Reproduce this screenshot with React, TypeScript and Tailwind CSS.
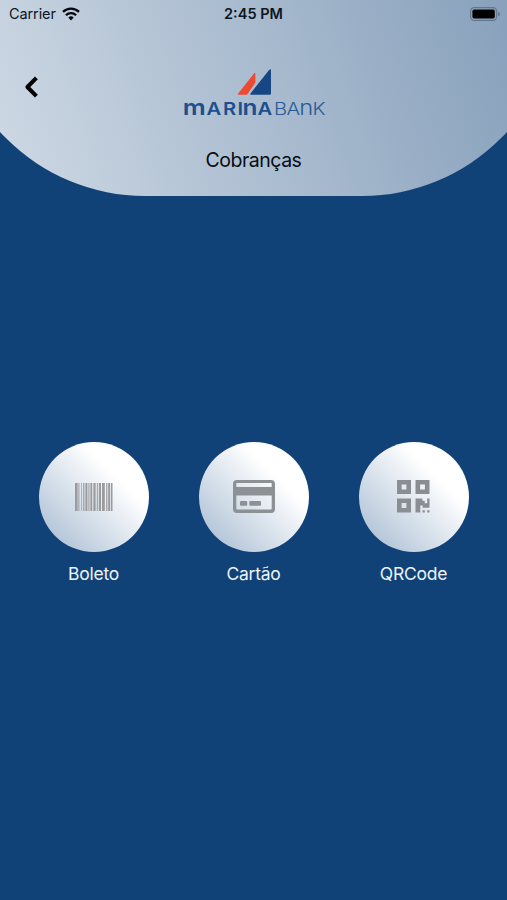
import type { ReactNode } from "react";

const bars = [
  [0, 2.6], [3.4, 1], [6.2, 0.7], [8.2, 1.2], [10.4, 2], [13.4, 1], [15.4, 1.8], [18.4, 2.2],
  [21.8, 1], [23.8, 2.2], [27, 2.8], [31.2, 1.2], [33.2, 1.8], [35.8, 1.7],
];

function Wifi() {
  return (
    <svg width="18" height="14" viewBox="0 0 18 14" fill="none" stroke="#05080c" strokeWidth="2.3">
      <path d="M1 4.9a11.5 11.5 0 0 1 16 0" />
      <path d="M3.9 8.2a7.2 7.2 0 0 1 10.2 0" />
      <path d="M9 13.4 6.3 10.6a3.9 3.9 0 0 1 5.4 0z" fill="#05080c" stroke="none" />
    </svg>
  );
}

function Battery() {
  return (
    <svg width="31" height="14" viewBox="0 0 31 14">
      <rect x="0.6" y="0.6" width="26" height="12.8" rx="3.6" fill="none" stroke="#62778d" strokeWidth="1.2" />
      <rect x="2.4" y="2.4" width="22.4" height="9.2" rx="1.8" fill="#000" />
      <path d="M28.2 4.6c2.4.8 2.4 4 0 4.8z" fill="#62778d" />
    </svg>
  );
}

function Logo() {
  return (
    <svg
      className="overflow-visible"
      width="144"
      height="54"
      viewBox="182 68 144 54"
      fontFamily="Inter, sans-serif"
    >
      <path d="M254.2 73.3q1.2-.8 1.2.8v8.4l-7.8 11.6q-.4.7-1.3.7h-7.6q-1.5 0-.5-1.4z" fill="#ee4a31" />
      <path d="M269.3 69.7q1.7-1.4 1.7.8v23q0 1.3-1.3 1.3h-18.3q-1.8 0-.7-1.5z" fill="#164784" />
      <g transform="translate(182 115.2) scale(1.16 1)">
        <text fontSize="17.4" fontWeight="600" fill="#1c4f8d">
          <tspan x="0.6" fontSize="22">m</tspan>
          <tspan x="21.1">A</tspan>
          <tspan x="35.3">R</tspan>
          <tspan x="47.8">I</tspan>
          <tspan x="52.1" fontSize="21">n</tspan>
          <tspan x="65">A</tspan>
        </text>
        <text fontSize="17.4" fontWeight="300" fill="#2a5b96">
          <tspan x="79.3">B</tspan>
          <tspan x="90.2">A</tspan>
          <tspan x="101" fontSize="20.5">n</tspan>
          <tspan x="112.6">K</tspan>
        </text>
      </g>
    </svg>
  );
}

function BarcodeIcon() {
  return (
    <svg width="38" height="28" viewBox="0 0 38 28" fill="#999b9d">
      {bars.map(([x, w]) => (
        <rect key={x} x={x} width={w} height="28" />
      ))}
    </svg>
  );
}

function CardIcon() {
  return (
    <svg width="42" height="33" viewBox="0 0 42 33" fill="#8e9194">
      <path
        fillRule="evenodd"
        d="M4 0h34a4 4 0 0 1 4 4v25a4 4 0 0 1-4 4H4a4 4 0 0 1-4-4V4a4 4 0 0 1 4-4zM4 3q-.7 0-.7.7V7h35.4V3.7q0-.7-.7-.7zM3.3 15.5v13.1q0 .9.9.9h33.6q.9 0 .9-.9V15.5z"
      />
      <rect x="7" y="21" width="7.2" height="4.8" rx="1" />
      <rect x="16.3" y="21" width="11.7" height="4.8" rx="1" />
    </svg>
  );
}

function QrIcon() {
  return (
    <svg width="33" height="33" viewBox="0 0 33 33" fill="#8a8d92">
      <path
        fillRule="evenodd"
        d="M0 0h14v14H0zM4.6 4.6v4.8h4.8V4.6zM18.5 0h14v14h-14zM23.1 4.6v4.8h4.8V4.6zM0 18.5h14v14H0zM4.6 23.1v4.8h4.8v-4.8z"
      />
      <path d="M18.5 18.5h6.8v2.3h2.4v2.4h2.5v-4.7h2.3v9.3h-6.8v-2.4h-2.4v7.1h-4.8z" />
      <path d="M25.5 30.2h2.3v2.3h-2.3zM30.2 30.2h2.3v2.3h-2.3z" />
    </svg>
  );
}

function Option({ label, children }: { label: string; children: ReactNode }) {
  return (
    <button className="flex w-40 flex-col items-center">
      <span className="flex size-[110px] items-center justify-center rounded-full bg-linear-to-tr from-[#a3b9d0] to-white to-70%">
        {children}
      </span>
      <span className="mt-2 text-[17.5px] leading-7 tracking-[-0.25px] text-[#edf3fa]">{label}</span>
    </button>
  );
}

export default function App() {
  return (
    <div className="h-[900px] w-[507px] overflow-hidden bg-[#114277] font-['Inter',sans-serif]">
      <header className="-mx-[51px] h-[196px] rounded-b-[196px] bg-linear-72 from-[#d5dee8] to-[#829cb8] px-[51px]">
        <div className="grid h-7 grid-cols-3 items-center pr-[6px] pl-[9px] text-[#0c1620]">
          <div className="flex items-center gap-[6px] text-[14.5px] tracking-[-0.1px]">
            Carrier
            <Wifi />
          </div>
          <div className="-ml-[3px] text-center text-[14.5px] font-semibold">2:45 PM</div>
          <div className="flex justify-end">
            <Battery />
          </div>
        </div>
        <div className="mt-10 grid grid-cols-[1fr_144px_1fr] items-start">
          <button className="pt-[7px] pl-6" aria-label="Voltar">
            <svg width="15" height="24" viewBox="0 0 15 24" fill="none" stroke="#000" strokeWidth="4" strokeLinejoin="round">
              <path d="M12.4 2.8 3.4 12l9 9.2" />
            </svg>
          </button>
          <Logo />
        </div>
        <h1 className="mt-6 text-center text-[19.5px] leading-7 tracking-[-0.5px] text-[#070d14]">Cobranças</h1>
      </header>
      <main className="mt-[245.5px] flex justify-center">
        <Option label="Boleto">
          <BarcodeIcon />
        </Option>
        <Option label="Cartão">
          <CardIcon />
        </Option>
        <Option label="QRCode">
          <QrIcon />
        </Option>
      </main>
    </div>
  );
}
